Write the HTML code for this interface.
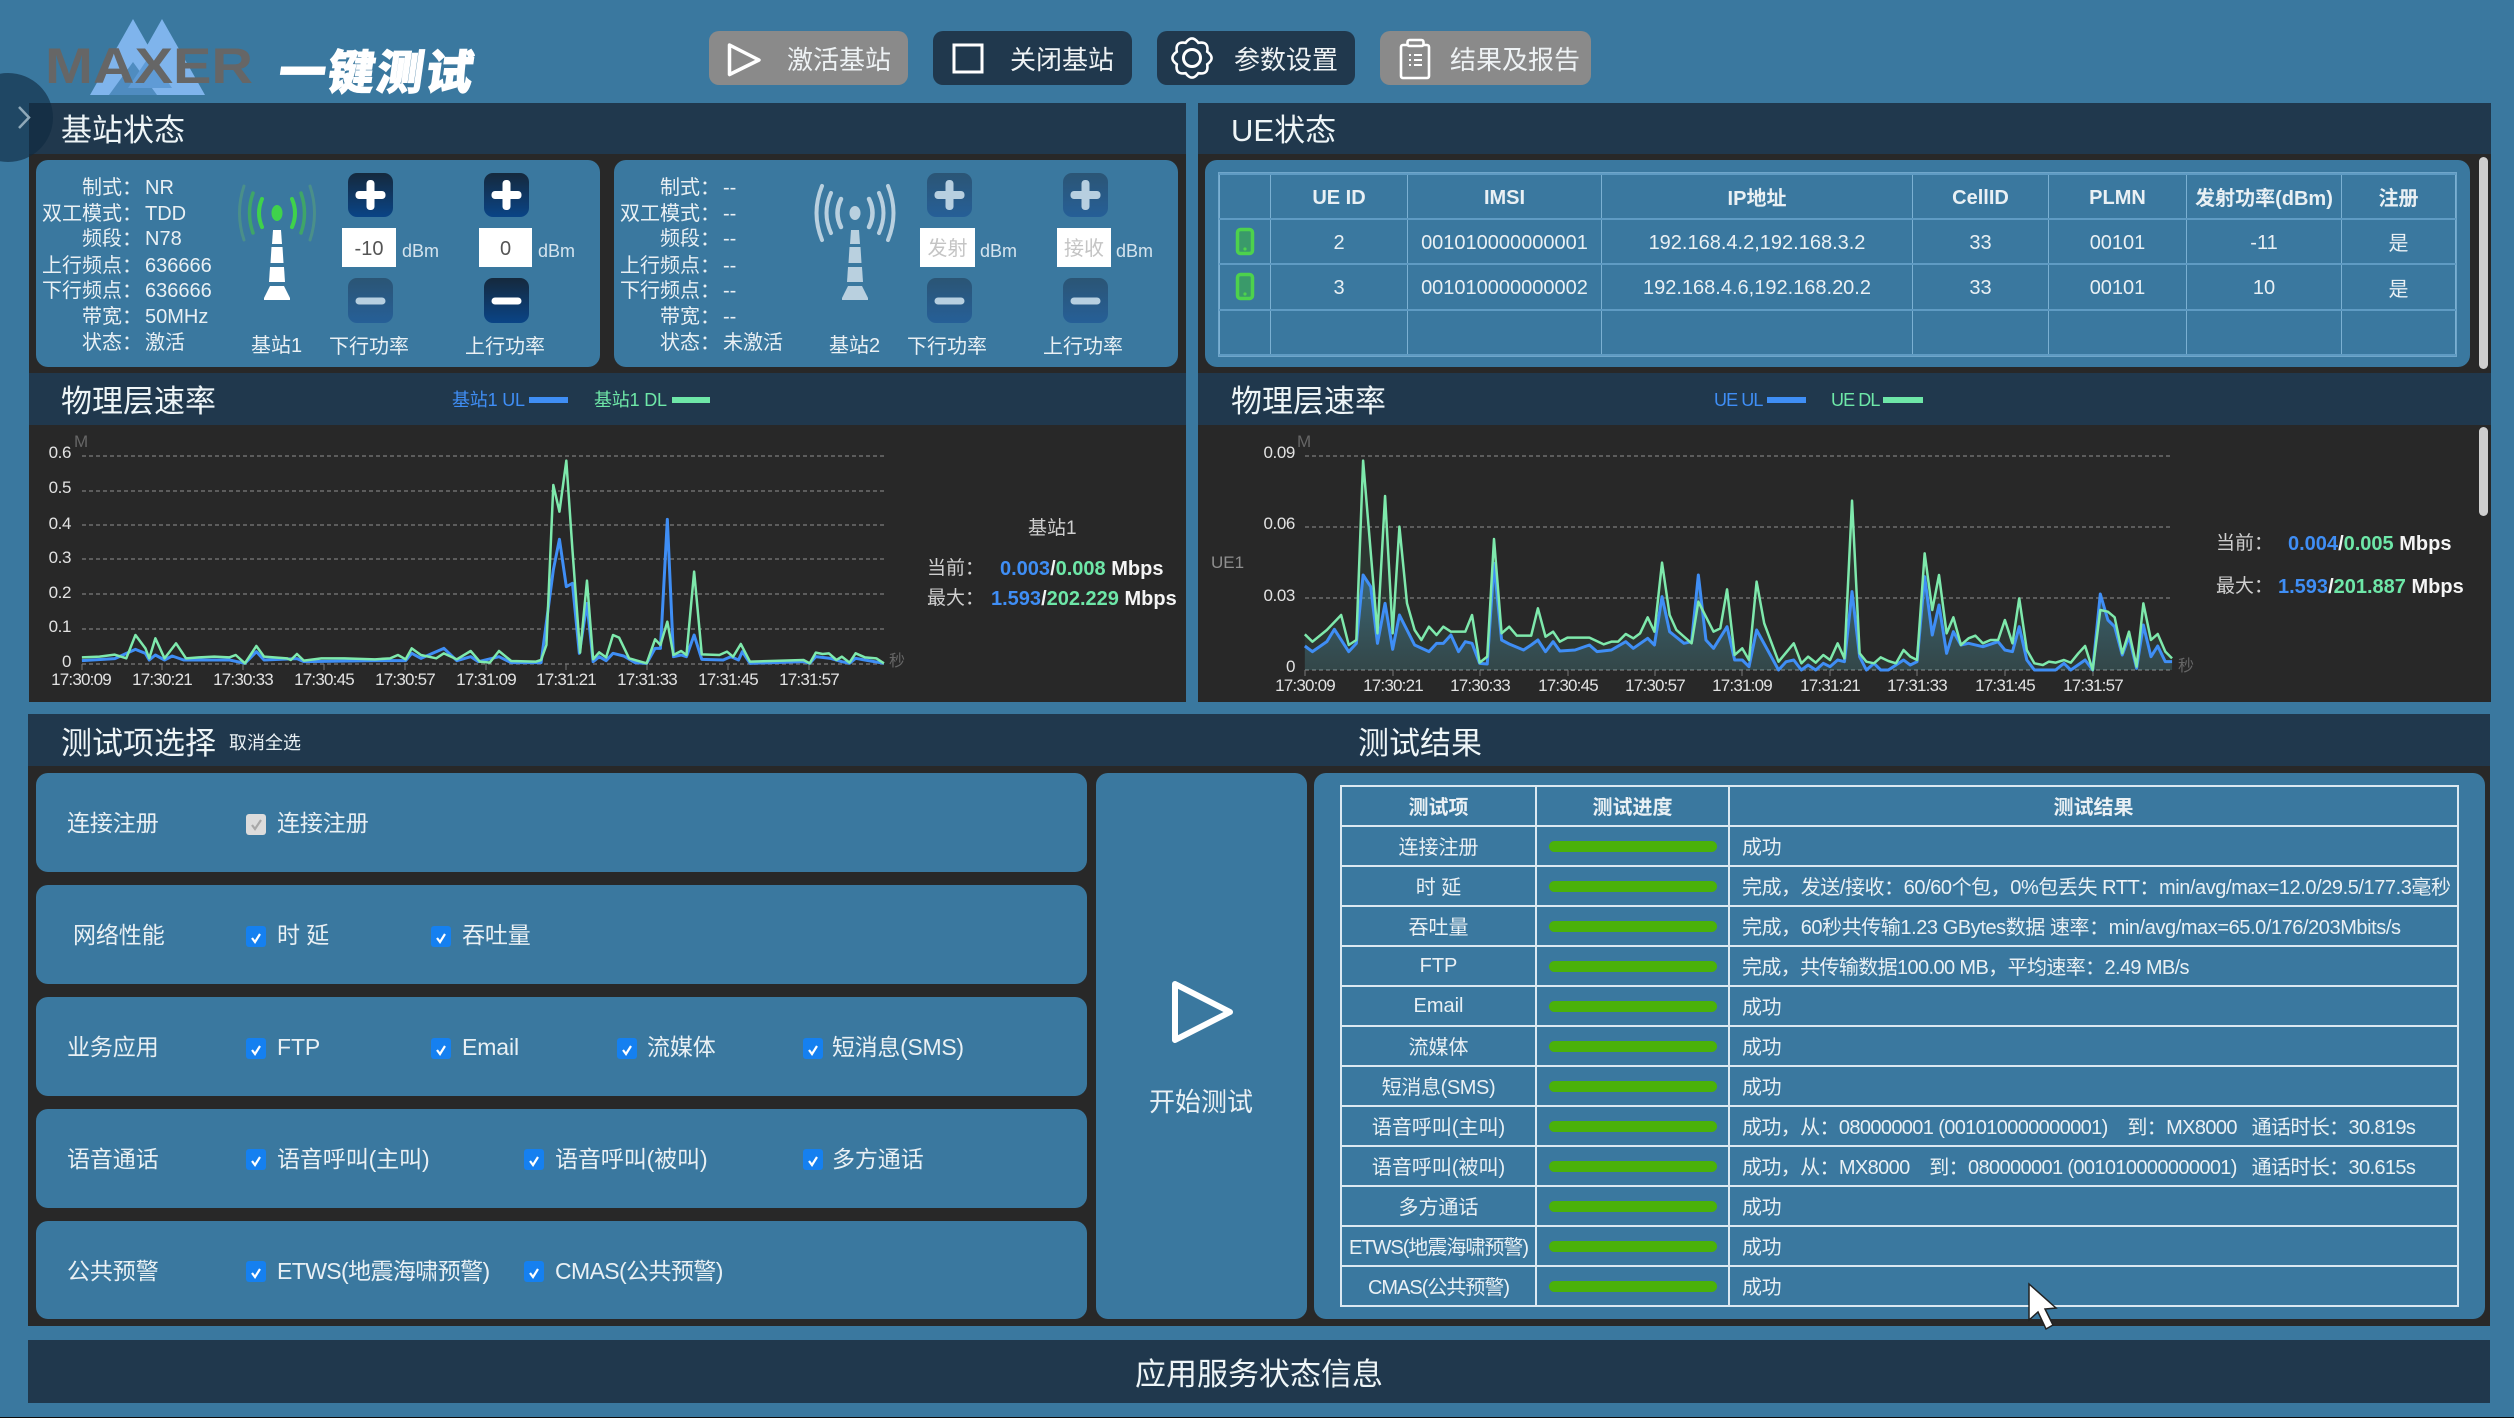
<!DOCTYPE html>
<html lang="zh">
<head>
<meta charset="utf-8">
<title>一键测试</title>
<style>
html,body{margin:0;padding:0}
body{width:2514px;height:1418px;overflow:hidden;position:relative;background:#3a789f;font-family:"Liberation Sans","Noto Sans CJK SC",sans-serif;color:#e9f0f4}
.b{position:absolute;box-sizing:border-box}
.t{position:absolute;white-space:nowrap;line-height:30px;height:30px;font-size:20px}
.hd{background:#20384d}
.dk{background:#282828}
.card{background:#3a789f;border-radius:12px}
.h1{font-size:31px;line-height:40px;height:40px;color:#eef5f7}
.lb{text-align:right;width:110px}
.c{text-align:center}
.btn{border-radius:10px;height:54px;top:31px}
.bt{font-size:26px;top:45px;color:#eef2f4}
.cb{position:absolute;width:20px;height:21px;border-radius:3px;background:#1580f0}
.row{font-size:23px;letter-spacing:-.1px}
table{position:absolute;border-collapse:collapse;table-layout:fixed;color:#e9f0f4;font-size:20px}
#ue td,#ue th{border:1px solid #7bb0d2;border-top:2px solid #5f9bc3;border-bottom:2px solid #5f9bc3;text-align:center;padding:3px 0 0;white-space:nowrap;overflow:hidden}
#ue td.k,#ue th.k{padding-top:0}
#ue{left:1219px;top:173px;width:1236px;outline:1px solid #6fa6ca}
#rs td,#rs th{box-sizing:border-box;border:2px solid #dbe8f1;padding:0 0 2px;height:40px;white-space:nowrap;text-align:center;overflow:visible}
#rs td.n{padding:0}
#rs{left:1340px;top:785px;width:1117px}
#rs td.r{text-align:left;padding-left:12px;letter-spacing:-.43px}
.pg{width:168px;height:11px;border-radius:6px;background:#4ab10a;margin-left:12px}
.tm{font-size:17px;letter-spacing:-.8px;width:80px;text-align:center;color:#e2e2e2}
.yv{font-size:17px;letter-spacing:-.4px;text-align:right;width:60px;color:#e2e2e2}
.st{font-size:20px;font-weight:700;color:#f4f4f4}
.st i{font-style:normal;color:#3f8ef5}
.st u{text-decoration:none;color:#6ee7a8}
.gl{font-size:19px;color:#cfcfcf}
.lg{font-size:18px;letter-spacing:-.2px}
svg{position:absolute;left:0;top:0}
</style>
</head>
<body>

<!-- panels -->
<div class="b hd" style="left:29px;top:103px;width:1157px;height:51px"></div>
<div class="b dk" style="left:29px;top:154px;width:1157px;height:219px"></div>
<div class="b hd" style="left:29px;top:373px;width:1157px;height:52px"></div>
<div class="b dk" style="left:29px;top:425px;width:1157px;height:277px"></div>

<div class="b hd" style="left:1198px;top:103px;width:1293px;height:51px"></div>
<div class="b dk" style="left:1198px;top:154px;width:1293px;height:219px"></div>
<div class="b hd" style="left:1198px;top:373px;width:1293px;height:52px"></div>
<div class="b dk" style="left:1198px;top:425px;width:1293px;height:277px"></div>

<div class="b hd" style="left:28px;top:714px;width:2462px;height:52px"></div>
<div class="b dk" style="left:28px;top:766px;width:2462px;height:560px"></div>
<div class="b hd" style="left:28px;top:1340px;width:2462px;height:63px"></div>
<div class="b" style="left:0;top:1417px;width:2514px;height:1px;background:#0c0c0c"></div>

<!-- cards -->
<div class="b card" style="left:36px;top:160px;width:564px;height:207px"></div>
<div class="b card" style="left:614px;top:160px;width:564px;height:207px"></div>
<div class="b card" style="left:1205px;top:160px;width:1265px;height:207px"></div>
<div class="b" style="left:2479px;top:157px;width:9px;height:212px;border-radius:5px;background:#cfcfcf"></div>
<div class="b" style="left:2479px;top:427px;width:9px;height:89px;border-radius:5px;background:#cfcfcf"></div>

<div class="b card" style="left:36px;top:773px;width:1051px;height:99px"></div>
<div class="b card" style="left:36px;top:885px;width:1051px;height:99px"></div>
<div class="b card" style="left:36px;top:997px;width:1051px;height:99px"></div>
<div class="b card" style="left:36px;top:1109px;width:1051px;height:99px"></div>
<div class="b card" style="left:36px;top:1221px;width:1051px;height:98px"></div>
<div class="b card" style="left:1096px;top:773px;width:211px;height:546px"></div>
<div class="b card" style="left:1314px;top:773px;width:1171px;height:546px"></div>

<!-- top buttons -->
<div class="b btn" style="left:709px;width:199px;background:#8a8a8a"></div>
<div class="b btn" style="left:933px;width:199px;background:#20384d"></div>
<div class="b btn" style="left:1157px;width:198px;background:#20384d"></div>
<div class="b btn" style="left:1380px;width:211px;background:#8a8a8a"></div>
<div class="t bt" style="left:787px">激活基站</div>
<div class="t bt" style="left:1010px">关闭基站</div>
<div class="t bt" style="left:1234px">参数设置</div>
<div class="t bt" style="left:1450px">结果及报告</div>

<!-- section titles -->
<div class="t h1" style="left:61px;top:111px">基站状态</div>
<div class="t h1" style="left:1231px;top:111px">UE状态</div>
<div class="t h1" style="left:61px;top:382px">物理层速率</div>
<div class="t h1" style="left:1231px;top:382px">物理层速率</div>
<div class="t h1" style="left:61px;top:724px">测试项选择</div>
<div class="t" style="left:229px;top:728px;font-size:18px">取消全选</div>
<div class="t h1" style="left:1358px;top:724px">测试结果</div>
<div class="t h1" style="left:1135px;top:1355px">应用服务状态信息</div>

<div class="t" style="left:279px;top:45px;font-size:47px;line-height:56px;height:56px;font-weight:900;color:#fff;transform:skewX(-8deg);letter-spacing:2px;-webkit-text-stroke:1px #fff">一键测试</div>

<!-- base station 1 info -->
<div class="t lb" style="left:32px;top:173px">制式&#65306;</div><div class="t" style="left:145px;top:173px">NR</div>
<div class="t lb" style="left:32px;top:199px">双工模式&#65306;</div><div class="t" style="left:145px;top:199px">TDD</div>
<div class="t lb" style="left:32px;top:224px">频段&#65306;</div><div class="t" style="left:145px;top:224px">N78</div>
<div class="t lb" style="left:32px;top:251px">上行频点&#65306;</div><div class="t" style="left:145px;top:251px">636666</div>
<div class="t lb" style="left:32px;top:276px">下行频点&#65306;</div><div class="t" style="left:145px;top:276px">636666</div>
<div class="t lb" style="left:32px;top:302px">带宽&#65306;</div><div class="t" style="left:145px;top:302px">50MHz</div>
<div class="t lb" style="left:32px;top:328px">状态&#65306;</div><div class="t" style="left:145px;top:328px">激活</div>
<div class="t" style="left:251px;top:331px">基站1</div>
<div class="t" style="left:329px;top:332px">下行功率</div>
<div class="t" style="left:465px;top:332px">上行功率</div>

<!-- base station 2 info -->
<div class="t lb" style="left:610px;top:173px">制式&#65306;</div><div class="t" style="left:723px;top:173px">--</div>
<div class="t lb" style="left:610px;top:199px">双工模式&#65306;</div><div class="t" style="left:723px;top:199px">--</div>
<div class="t lb" style="left:610px;top:224px">频段&#65306;</div><div class="t" style="left:723px;top:224px">--</div>
<div class="t lb" style="left:610px;top:251px">上行频点&#65306;</div><div class="t" style="left:723px;top:251px">--</div>
<div class="t lb" style="left:610px;top:276px">下行频点&#65306;</div><div class="t" style="left:723px;top:276px">--</div>
<div class="t lb" style="left:610px;top:302px">带宽&#65306;</div><div class="t" style="left:723px;top:302px">--</div>
<div class="t lb" style="left:610px;top:328px">状态&#65306;</div><div class="t" style="left:723px;top:328px">未激活</div>
<div class="t" style="left:829px;top:331px">基站2</div>
<div class="t" style="left:907px;top:332px">下行功率</div>
<div class="t" style="left:1043px;top:332px">上行功率</div>

<!-- power inputs -->
<div class="b" style="left:342px;top:228px;width:54px;height:39px;background:#fff"></div>
<div class="t c" style="left:342px;top:234px;width:54px;color:#555">-10</div>
<div class="t" style="left:402px;top:236px;font-size:18px;color:#d5e4ee">dBm</div>
<div class="b" style="left:479px;top:228px;width:53px;height:39px;background:#fff"></div>
<div class="t c" style="left:479px;top:234px;width:53px;color:#555">0</div>
<div class="t" style="left:538px;top:236px;font-size:18px;color:#d5e4ee">dBm</div>
<div class="b" style="left:920px;top:228px;width:55px;height:39px;background:#fff"></div>
<div class="t c" style="left:920px;top:234px;width:55px;color:#c4c4c4">发射</div>
<div class="t" style="left:980px;top:236px;font-size:18px;color:#d5e4ee">dBm</div>
<div class="b" style="left:1057px;top:228px;width:54px;height:39px;background:#fff"></div>
<div class="t c" style="left:1057px;top:234px;width:54px;color:#c4c4c4">接收</div>
<div class="t" style="left:1116px;top:236px;font-size:18px;color:#d5e4ee">dBm</div>

<!-- UE table -->
<table id="ue">
<colgroup><col style="width:51px"><col style="width:137px"><col style="width:194px"><col style="width:311px"><col style="width:136px"><col style="width:138px"><col style="width:155px"><col style="width:114px"></colgroup>
<tr style="height:45px"><th></th><th>UE ID</th><th>IMSI</th><th class="k">IP地址</th><th>CellID</th><th>PLMN</th><th class="k">发射功率(dBm)</th><th class="k">注册</th></tr>
<tr style="height:45px"><td></td><td>2</td><td>001010000000001</td><td>192.168.4.2,192.168.3.2</td><td>33</td><td>00101</td><td>-11</td><td class="k">是</td></tr>
<tr style="height:46px"><td></td><td>3</td><td>001010000000002</td><td>192.168.4.6,192.168.20.2</td><td>33</td><td>00101</td><td>10</td><td class="k">是</td></tr>
<tr style="height:45px"><td></td><td></td><td></td><td></td><td></td><td></td><td></td><td></td></tr>
</table>

<!-- legends -->
<div class="t lg" style="left:452px;top:385px;color:#3f8ef5">基站1 UL</div>
<div class="b" style="left:529px;top:397px;width:39px;height:6px;background:#3f8ef5"></div>
<div class="t lg" style="left:594px;top:385px;color:#6ee7a8">基站1 DL</div>
<div class="b" style="left:672px;top:397px;width:38px;height:6px;background:#6ee7a8"></div>
<div class="t lg" style="left:1714px;top:385px;color:#3f8ef5;letter-spacing:-.9px">UE UL</div>
<div class="b" style="left:1767px;top:397px;width:39px;height:6px;background:#3f8ef5"></div>
<div class="t lg" style="left:1831px;top:385px;color:#6ee7a8;letter-spacing:-.9px">UE DL</div>
<div class="b" style="left:1883px;top:397px;width:40px;height:6px;background:#6ee7a8"></div>

<!-- chart 1 labels -->
<div class="t" style="left:74px;top:427px;font-size:17px;color:#666">M</div>
<div class="t yv" style="left:11px;top:438px">0.6</div>
<div class="t yv" style="left:11px;top:473px">0.5</div>
<div class="t yv" style="left:11px;top:509px">0.4</div>
<div class="t yv" style="left:11px;top:543px">0.3</div>
<div class="t yv" style="left:11px;top:578px">0.2</div>
<div class="t yv" style="left:11px;top:612px">0.1</div>
<div class="t yv" style="left:11px;top:647px">0</div>
<div class="t" style="left:889px;top:647px;font-size:16px;color:#666">秒</div>
<div class="t tm" style="left:41px;top:665px">17:30:09</div>
<div class="t tm" style="left:122px;top:665px">17:30:21</div>
<div class="t tm" style="left:203px;top:665px">17:30:33</div>
<div class="t tm" style="left:284px;top:665px">17:30:45</div>
<div class="t tm" style="left:365px;top:665px">17:30:57</div>
<div class="t tm" style="left:446px;top:665px">17:31:09</div>
<div class="t tm" style="left:526px;top:665px">17:31:21</div>
<div class="t tm" style="left:607px;top:665px">17:31:33</div>
<div class="t tm" style="left:688px;top:665px">17:31:45</div>
<div class="t tm" style="left:769px;top:665px">17:31:57</div>
<div class="t gl" style="left:1028px;top:514px">基站1</div>
<div class="t gl" style="left:927px;top:554px">当前&#65306;</div>
<div class="t st" style="left:1000px;top:554px"><i>0.003</i>/<u>0.008</u> Mbps</div>
<div class="t gl" style="left:927px;top:584px">最大&#65306;</div>
<div class="t st" style="left:991px;top:584px"><i>1.593</i>/<u>202.229</u> Mbps</div>

<!-- chart 2 labels -->
<div class="t" style="left:1297px;top:427px;font-size:17px;color:#666">M</div>
<div class="t yv" style="left:1235px;top:438px">0.09</div>
<div class="t yv" style="left:1235px;top:509px">0.06</div>
<div class="t yv" style="left:1235px;top:581px">0.03</div>
<div class="t yv" style="left:1235px;top:652px">0</div>
<div class="t" style="left:1211px;top:548px;font-size:17px;color:#8f8f8f">UE1</div>
<div class="t" style="left:2178px;top:652px;font-size:16px;color:#666">秒</div>
<div class="t tm" style="left:1265px;top:671px">17:30:09</div>
<div class="t tm" style="left:1353px;top:671px">17:30:21</div>
<div class="t tm" style="left:1440px;top:671px">17:30:33</div>
<div class="t tm" style="left:1528px;top:671px">17:30:45</div>
<div class="t tm" style="left:1615px;top:671px">17:30:57</div>
<div class="t tm" style="left:1702px;top:671px">17:31:09</div>
<div class="t tm" style="left:1790px;top:671px">17:31:21</div>
<div class="t tm" style="left:1877px;top:671px">17:31:33</div>
<div class="t tm" style="left:1965px;top:671px">17:31:45</div>
<div class="t tm" style="left:2053px;top:671px">17:31:57</div>
<div class="t gl" style="left:2216px;top:529px">当前&#65306;</div>
<div class="t st" style="left:2288px;top:529px"><i>0.004</i>/<u>0.005</u> Mbps</div>
<div class="t gl" style="left:2216px;top:572px">最大&#65306;</div>
<div class="t st" style="left:2278px;top:572px"><i>1.593</i>/<u>201.887</u> Mbps</div>

<!-- test selection rows -->
<div class="t row" style="left:67px;top:808px">连接注册</div>
<div class="t row" style="left:73px;top:920px">网络性能</div>
<div class="t row" style="left:67px;top:1032px">业务应用</div>
<div class="t row" style="left:67px;top:1144px">语音通话</div>
<div class="t row" style="left:67px;top:1256px">公共预警</div>

<div class="cb" style="left:246px;top:814px;background:#dcdcdc"></div>
<div class="t row" style="left:277px;top:808px">连接注册</div>

<div class="cb" style="left:246px;top:926px"></div><div class="t row" style="left:277px;top:920px">时 延</div>
<div class="cb" style="left:431px;top:926px"></div><div class="t row" style="left:462px;top:920px">吞吐量</div>

<div class="cb" style="left:246px;top:1038px"></div><div class="t row" style="left:277px;top:1032px">FTP</div>
<div class="cb" style="left:431px;top:1038px"></div><div class="t row" style="left:462px;top:1032px">Email</div>
<div class="cb" style="left:617px;top:1038px"></div><div class="t row" style="left:647px;top:1032px">流媒体</div>
<div class="cb" style="left:803px;top:1038px"></div><div class="t row" style="left:832px;top:1032px;letter-spacing:-.3px">短消息(SMS)</div>

<div class="cb" style="left:246px;top:1149px"></div><div class="t row" style="left:277px;top:1144px">语音呼叫(主叫)</div>
<div class="cb" style="left:524px;top:1149px"></div><div class="t row" style="left:555px;top:1144px">语音呼叫(被叫)</div>
<div class="cb" style="left:803px;top:1149px"></div><div class="t row" style="left:832px;top:1144px">多方通话</div>

<div class="cb" style="left:246px;top:1261px"></div><div class="t row" style="left:277px;top:1256px;letter-spacing:-.6px">ETWS(地震海啸预警)</div>
<div class="cb" style="left:524px;top:1261px"></div><div class="t row" style="left:555px;top:1256px;letter-spacing:-.6px">CMAS(公共预警)</div>

<div class="t" style="left:1149px;top:1087px;font-size:26px">开始测试</div>

<!-- result table -->
<table id="rs">
<colgroup><col style="width:195px"><col style="width:193px"><col style="width:729px"></colgroup>
<tr><th>测试项</th><th>测试进度</th><th>测试结果</th></tr>
<tr><td>连接注册</td><td class="n"><div class="pg"></div></td><td class="r">成功</td></tr>
<tr><td>时 延</td><td class="n"><div class="pg"></div></td><td class="r">完成&#65292;发送/接收&#65306;60/60个包&#65292;0%包丢失 RTT&#65306;min/avg/max=12.0/29.5/177.3毫秒</td></tr>
<tr><td>吞吐量</td><td class="n"><div class="pg"></div></td><td class="r">完成&#65292;60秒共传输1.23 GBytes数据 速率&#65306;min/avg/max=65.0/176/203Mbits/s</td></tr>
<tr><td class="n">FTP</td><td class="n"><div class="pg"></div></td><td class="r" style="letter-spacing:-.62px">完成&#65292;共传输数据100.00 MB&#65292;平均速率&#65306;2.49 MB/s</td></tr>
<tr><td class="n">Email</td><td class="n"><div class="pg"></div></td><td class="r">成功</td></tr>
<tr><td>流媒体</td><td class="n"><div class="pg"></div></td><td class="r">成功</td></tr>
<tr><td style="letter-spacing:-.4px">短消息(SMS)</td><td class="n"><div class="pg"></div></td><td class="r">成功</td></tr>
<tr><td>语音呼叫(主叫)</td><td class="n"><div class="pg"></div></td><td class="r" style="letter-spacing:-.63px">成功&#65292;从&#65306;080000001 (001010000000001)&nbsp;&nbsp;&nbsp;&nbsp;到&#65306;MX8000&nbsp;&nbsp;&nbsp;通话时长&#65306;30.819s</td></tr>
<tr><td>语音呼叫(被叫)</td><td class="n"><div class="pg"></div></td><td class="r" style="letter-spacing:-.63px">成功&#65292;从&#65306;MX8000&nbsp;&nbsp;&nbsp;&nbsp;到&#65306;080000001 (001010000000001)&nbsp;&nbsp;&nbsp;通话时长&#65306;30.615s</td></tr>
<tr><td>多方通话</td><td class="n"><div class="pg"></div></td><td class="r">成功</td></tr>
<tr><td style="letter-spacing:-1px">ETWS(地震海啸预警)</td><td class="n"><div class="pg"></div></td><td class="r">成功</td></tr>
<tr><td style="letter-spacing:-1px">CMAS(公共预警)</td><td class="n"><div class="pg"></div></td><td class="r">成功</td></tr>
</table>

<svg width="2514" height="1418" viewBox="0 0 2514 1418">
<defs>
<linearGradient id="bd" x1="0" y1="0" x2="0" y2="1"><stop offset="0" stop-color="#15293d"/><stop offset="1" stop-color="#0a4486"/></linearGradient>
<linearGradient id="bf" x1="0" y1="0" x2="0" y2="1"><stop offset="0" stop-color="#2b5575"/><stop offset="1" stop-color="#265f97"/></linearGradient>
<linearGradient id="ar" x1="0" y1="0" x2="0" y2="1"><stop offset="0" stop-color="#4aa0c8" stop-opacity=".5"/><stop offset="1" stop-color="#4a8aa8" stop-opacity=".2"/></linearGradient>
<g id="tw">
<polygon points="-4,230 4,230 5,244 -5,244"/>
<polygon points="-5.5,247 5.5,247 6.5,263 -6.5,263"/>
<polygon points="-7,267 7,267 8,282 -8,282"/>
<polygon points="-7,286 7,286 13,298 13,300 -13,300 -13,298"/>
</g>
<g id="pl"><rect x="-15" y="-4" width="30" height="8" rx="3.5"/><rect x="-4" y="-15" width="8" height="30" rx="3.5"/></g>
<rect id="mi" x="-15" y="-3.5" width="30" height="7" rx="3.5"/>
<polyline id="ck" points="-4,1 -1,5 4,-3" fill="none" stroke="#fff" stroke-width="2.2"/>
</defs>

<!-- logo -->
<polygon points="133,19 90,95 176,95" fill="#7fb4ec"/>
<polygon points="162,19 119,95 205,95" fill="#7fb4ec"/>
<polygon points="133,62 109,95 157,95" fill="#4f8cc0"/>
<polygon points="150,55 128,88 172,88" fill="#5f9bd6"/>
<text x="45" y="83" font-family="Liberation Sans" font-size="50" font-weight="700" fill="#666" textLength="208" lengthAdjust="spacingAndGlyphs">MAXER</text>

<!-- button icons -->
<path d="M729.5,45 L759,60 L729.5,74.5Z" fill="none" stroke="#fff" stroke-width="3.5" stroke-linejoin="round"/>
<rect x="954" y="45" width="28" height="27" fill="none" stroke="#fff" stroke-width="3"/>
<g transform="translate(1192,58)" fill="none" stroke="#fff" stroke-width="2.6">
<path d="M15.2,6.3 Q17,17 6.3,15.2 Q0,24 -6.3,15.2 Q-17,17 -15.2,6.3 Q-24,0 -15.2,-6.3 Q-17,-17 -6.3,-15.2 Q0,-24 6.3,-15.2 Q17,-17 15.2,-6.3 Q24,0 15.2,6.3Z"/>
<circle r="8.5" stroke-width="3"/>
</g>
<g fill="none" stroke="#fff" stroke-width="2.6">
<rect x="1401" y="45" width="28" height="33" rx="2"/>
<rect x="1407.5" y="40" width="16" height="6" rx="2" fill="#8a8a8a"/>
<path d="M1409,55h2M1409,60h2M1409,65h2M1414,55h8M1414,60h8M1414,65h8" stroke-width="2"/>
</g>

<!-- towers -->
<g fill="none" stroke-linecap="round" transform="translate(277,213)">
<path d="M-15,-14 Q-21,0 -15,14 M15,-14 Q21,0 15,14" stroke="#3fd24b" stroke-width="4"/>
<path d="M-24,-20 Q-31,0 -24,20 M24,-20 Q31,0 24,20" stroke="#3fa568" stroke-width="3.5"/>
<path d="M-33,-27 Q-42,0 -33,27 M33,-27 Q42,0 33,27" stroke="#4a8f8a" stroke-width="3"/>
</g>
<ellipse cx="277" cy="213" rx="5.5" ry="8" fill="#3fd24b"/>
<use href="#tw" x="277" fill="#fff"/>
<g fill="none" stroke="#b9d0df" stroke-linecap="round" transform="translate(855,213)">
<path d="M-14,-14 Q-21,0 -14,14 M14,-14 Q21,0 14,14" stroke-width="4.5"/>
<path d="M-24,-20 Q-33,0 -24,20 M24,-20 Q33,0 24,20" stroke-width="4"/>
<path d="M-33,-27 Q-44,0 -33,27 M33,-27 Q44,0 33,27" stroke-width="4"/>
</g>
<ellipse cx="855" cy="213" rx="5.5" ry="7" fill="#b9d0df"/>
<use href="#tw" x="855" fill="#b9d0df"/>

<!-- +/- buttons -->
<rect x="348" y="173" width="45" height="44" rx="9" fill="url(#bd)"/><use href="#pl" x="370.5" y="195" fill="#fff"/>
<rect x="484" y="173" width="45" height="44" rx="9" fill="url(#bd)"/><use href="#pl" x="506.5" y="195" fill="#fff"/>
<rect x="348" y="278" width="45" height="45" rx="9" fill="url(#bf)"/><use href="#mi" x="370.5" y="301" fill="#b7cfe0"/>
<rect x="484" y="278" width="45" height="45" rx="9" fill="url(#bd)"/><use href="#mi" x="506.5" y="301" fill="#fff"/>
<rect x="927" y="173" width="45" height="44" rx="9" fill="url(#bf)"/><use href="#pl" x="949.5" y="195" fill="#b7cfe0"/>
<rect x="1063" y="173" width="45" height="44" rx="9" fill="url(#bf)"/><use href="#pl" x="1085.5" y="195" fill="#b7cfe0"/>
<rect x="927" y="278" width="45" height="45" rx="9" fill="url(#bf)"/><use href="#mi" x="949.5" y="301" fill="#b7cfe0"/>
<rect x="1063" y="278" width="45" height="45" rx="9" fill="url(#bf)"/><use href="#mi" x="1085.5" y="301" fill="#b7cfe0"/>

<!-- phones -->
<rect x="1237.5" y="229.5" width="15" height="24" rx="3" fill="#3a9a6a" stroke="#4dd24d" stroke-width="3.5"/>
<circle cx="1245" cy="249" r="1.6" fill="#4dd24d"/>
<rect x="1237.5" y="274.5" width="15" height="24" rx="3" fill="#3a9a6a" stroke="#4dd24d" stroke-width="3.5"/>
<circle cx="1245" cy="294" r="1.6" fill="#4dd24d"/>

<!-- checkmarks -->
<polyline points="252,825 255,829 261,820" fill="none" stroke="#a8a8a8" stroke-width="2.2"/>
<use href="#ck" x="256" y="937"/><use href="#ck" x="441" y="937"/>
<use href="#ck" x="256" y="1049"/><use href="#ck" x="441" y="1049"/><use href="#ck" x="627" y="1049"/><use href="#ck" x="813" y="1049"/>
<use href="#ck" x="256" y="1160"/><use href="#ck" x="534" y="1160"/><use href="#ck" x="813" y="1160"/>
<use href="#ck" x="256" y="1272"/><use href="#ck" x="534" y="1272"/>

<!-- start-test play -->
<path d="M1175,984 L1230,1012 L1175,1040Z" fill="none" stroke="#fff" stroke-width="6" stroke-linejoin="round"/>

<!-- chart 1 grid -->
<g stroke="#6e6e6e" stroke-width="1.5" stroke-dasharray="4 3" fill="none">
<path d="M82,456H884M82,491H884M82,525H884M82,559H884M82,594H884M82,629H884M82,664H884"/>
</g>
<path d="M82,664v6M162,664v6M243,664v6M324,664v6M405,664v6M486,664v6M566,664v6M647,664v6M728,664v6M809,664v6" stroke="#777" stroke-width="1"/>
<!-- chart 1 lines (coords in 1.307x/3y reference space) -->
<g transform="translate(0 370) scale(.7653 .33333)" fill="none" stroke-linejoin="round">
<polyline vector-effect="non-scaling-stroke" stroke="#3f8ef5" stroke-width="3" points="107,872 150,866 177,838 190,850 195,870 203,855 215,870 225,858 240,870 300,870 320,880 335,845 345,870 388,866 397,875 490,872 530,872 538,850 550,865 580,835 597,872 615,860 625,875 652,860 668,878 707,878 723,600 731,508 740,650 748,640 757,850 767,700 775,875 783,860 792,872 801,850 815,858 830,878 845,880 856,835 863,835 872,448 880,860 890,855 897,860 907,795 917,868 945,870 955,860 965,870 970,845 980,880 1050,875 1058,880 1066,860 1085,865 1100,875 1110,880 1118,865 1130,870 1155,880"/>
<polyline vector-effect="non-scaling-stroke" stroke="#7ee9ac" stroke-width="2.5" points="107,862 130,860 150,854 165,865 177,795 190,835 195,865 203,805 215,865 230,820 243,865 260,862 280,860 300,862 308,855 320,880 335,828 345,860 375,865 380,870 388,852 397,872 420,865 450,865 490,868 510,865 520,855 530,868 538,835 550,855 570,865 580,850 597,868 615,843 627,875 640,878 652,843 668,873 700,875 707,870 714,825 723,345 731,425 740,272 748,540 758,848 767,632 775,868 783,847 792,862 801,795 809,803 822,865 845,880 856,808 863,825 872,755 880,855 890,843 897,855 907,605 917,853 940,855 950,845 958,860 968,822 980,875 1050,870 1058,880 1066,848 1075,852 1083,850 1093,870 1100,860 1110,878 1118,850 1130,862 1145,865 1155,880"/>
</g>

<!-- chart 2 grid -->
<g stroke="#6e6e6e" stroke-width="1.5" stroke-dasharray="4 3" fill="none">
<path d="M1305,456H2172M1305,527H2172M1305,598H2172M1305,670H2172"/>
</g>
<path d="M1305,670v6M1393,670v6M1480,670v6M1568,670v6M1655,670v6M1742,670v6M1830,670v6M1917,670v6M2005,670v6M2093,670v6" stroke="#777" stroke-width="1"/>
<!-- chart 2 lines (coords in 1.184x/3y reference space) -->
<g transform="translate(1190 370) scale(.84443 .33333)" fill="none" stroke-linejoin="round">
<polygon fill="#6ee7a8" fill-opacity=".08" points="136,900 136,793 145,815 162,780 179,735 188,825 197,810 205,272 222,790 231,378 240,790 248,470 257,700 266,780 274,810 283,770 292,795 300,770 309,785 326,785 334,735 343,878 352,860 360,507 369,790 378,770 387,797 404,797 412,715 421,800 430,785 438,815 447,803 473,803 490,823 499,815 507,815 516,792 525,805 533,790 542,742 550,785 559,578 568,735 576,780 594,820 602,695 620,785 628,775 636,658 645,855 654,835 662,870 671,635 680,760 697,875 715,820 724,880 732,860 741,878 750,855 758,870 767,820 775,865 784,392 793,850 801,875 810,880 818,862 827,873 836,880 845,840 853,860 861,870 870,550 879,720 887,615 896,790 904,742 913,825 922,805 930,797 939,820 948,810 957,810 965,750 974,820 982,685 991,840 1000,880 1010,885 1017,875 1025,878 1035,870 1043,878 1052,850 1060,828 1069,900 1078,720 1087,725 1095,742 1104,850 1112,785 1121,890 1129,700 1138,810 1146,792 1155,845 1163,865 1163,900"/>
<polygon fill="url(#ar)" points="136,900 136,828 145,845 162,815 171,778 188,845 197,820 205,615 214,650 222,820 231,700 240,838 248,735 266,825 283,845 292,820 300,820 309,795 318,845 326,815 334,820 343,880 352,882 360,580 369,810 378,822 395,840 404,825 412,810 421,845 430,815 438,843 456,840 473,825 482,845 499,840 516,815 525,835 542,805 550,825 559,680 568,785 585,820 594,815 602,615 611,810 620,835 636,770 645,870 654,870 662,890 671,780 697,900 706,875 715,870 724,900 732,885 741,900 750,880 758,890 767,870 775,875 784,665 793,860 801,900 810,880 818,900 827,900 845,870 853,885 861,875 870,620 879,795 887,705 896,850 904,785 913,825 922,820 939,830 957,815 965,840 974,845 982,770 991,870 1000,900 1025,900 1035,880 1043,900 1060,870 1069,900 1078,672 1087,750 1095,770 1104,855 1112,800 1121,895 1129,765 1138,860 1146,828 1155,875 1163,875 1163,900"/>
<polyline vector-effect="non-scaling-stroke" stroke="#3f8ef5" stroke-width="3" points="136,828 145,845 162,815 171,778 188,845 197,820 205,615 214,650 222,820 231,700 240,838 248,735 266,825 283,845 292,820 300,820 309,795 318,845 326,815 334,820 343,880 352,882 360,580 369,810 378,822 395,840 404,825 412,810 421,845 430,815 438,843 456,840 473,825 482,845 499,840 516,815 525,835 542,805 550,825 559,680 568,785 585,820 594,815 602,615 611,810 620,835 636,770 645,870 654,870 662,890 671,780 697,900 706,875 715,870 724,900 732,885 741,900 750,880 758,890 767,870 775,875 784,665 793,860 801,900 810,880 818,900 827,900 845,870 853,885 861,875 870,620 879,795 887,705 896,850 904,785 913,825 922,820 939,830 957,815 965,840 974,845 982,770 991,870 1000,900 1025,900 1035,880 1043,900 1060,870 1069,900 1078,672 1087,750 1095,770 1104,855 1112,800 1121,895 1129,765 1138,860 1146,828 1155,875 1163,875"/>
<polyline vector-effect="non-scaling-stroke" stroke="#7ee9ac" stroke-width="2.5" points="136,793 145,815 162,780 179,735 188,825 197,810 205,272 222,790 231,378 240,790 248,470 257,700 266,780 274,810 283,770 292,795 300,770 309,785 326,785 334,735 343,878 352,860 360,507 369,790 378,770 387,797 404,797 412,715 421,800 430,785 438,815 447,803 473,803 490,823 499,815 507,815 516,792 525,805 533,790 542,742 550,785 559,578 568,735 576,780 594,820 602,695 620,785 628,775 636,658 645,855 654,835 662,870 671,635 680,760 697,875 715,820 724,880 732,860 741,878 750,855 758,870 767,820 775,865 784,392 793,850 801,875 810,880 818,862 827,873 836,880 845,840 853,860 861,870 870,550 879,720 887,615 896,790 904,742 913,825 922,805 930,797 939,820 948,810 957,810 965,750 974,820 982,685 991,840 1000,880 1010,885 1017,875 1025,878 1035,870 1043,878 1052,850 1060,828 1069,900 1078,720 1087,725 1095,742 1104,850 1112,785 1121,890 1129,700 1138,810 1146,792 1155,845 1163,865"/>
</g>

<!-- side drawer -->
<ellipse cx="8" cy="117.5" rx="45" ry="44.5" fill="#0f2a40" fill-opacity=".62"/>
<polyline points="19,107 29,117.5 19,128" fill="none" stroke="#8fa9b9" stroke-width="2.5"/>

<!-- mouse cursor -->
<polygon points="2029,1284 2029,1320 2038,1312 2046,1329 2053,1325 2045,1309 2056,1308" fill="#fff" stroke="#222" stroke-width="1.5"/>
</svg>

</body>
</html>
